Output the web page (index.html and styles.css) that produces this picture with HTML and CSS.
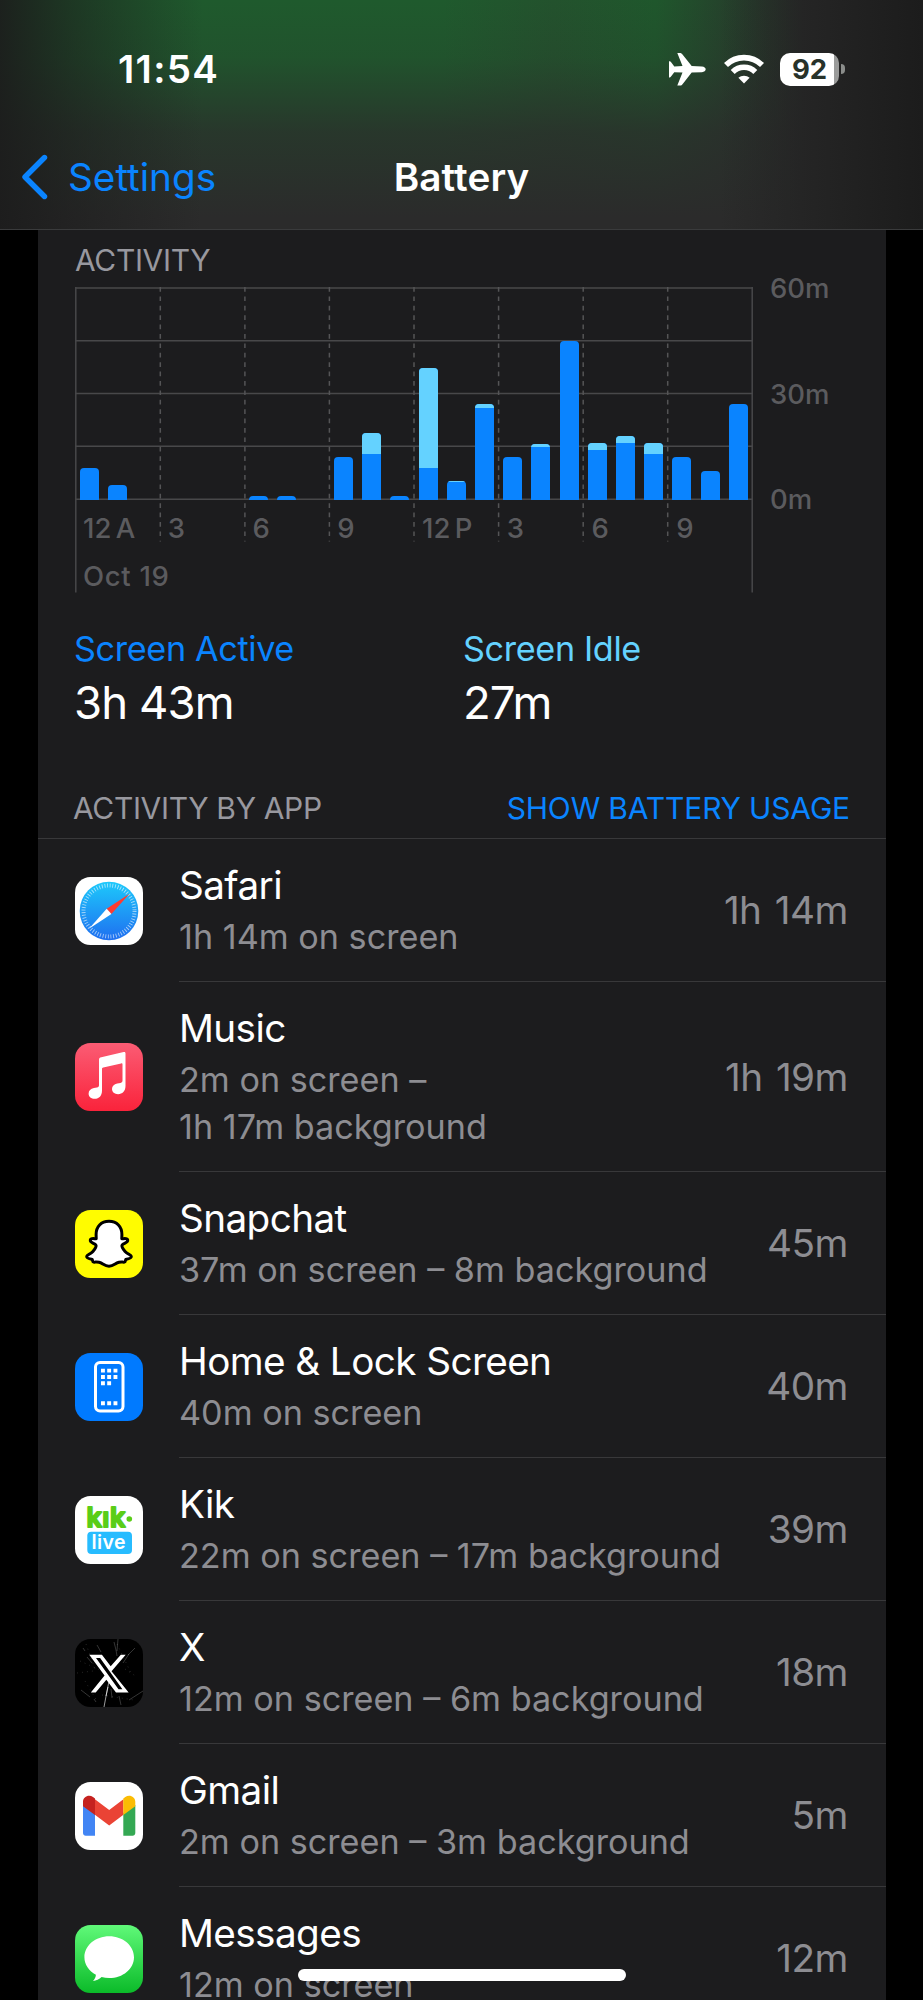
FILE: index.html
```html
<!DOCTYPE html>
<html lang="en">

<head>
  <meta charset="UTF-8">
  <meta name="viewport" content="width=device-width, initial-scale=1.0">
  <title>Battery</title>
  <link rel="stylesheet" href="styles.css">
</head>

<body>
  <div class="screen">
    <header class="header">
      <div class="status-bar">
        <span class="status-time">11:54</span>
        <div class="status-icons">
          <svg class="icon-plane" viewBox="0 0 37 33" fill="#fff">
            <path d="M33 13.400c2.200.2 3.700 1.400 3.700 2.900s-1.500 2.700-3.700 2.900l-10.300.4-9.400 11.800c-.7.900-1.500 1.100-2.600 1.100H8.300l5.200-12.900-8.200-.4-3.500 4.600c-.3.400-.7.600-1.200.6H0V8.200h.6c.5 0 .9.200 1.200.6l3.500 4.600 8.200-.4L8.300.1h2.400c1.100 0 1.900.3 2.600 1.200L22.700 13z" />
          </svg>
          <svg class="icon-wifi" viewBox="0 0 40 30" fill="none" stroke="#fff" stroke-width="5.600">
            <path d="M2 11a25.600 25.600 0 0 1 36 0" />
            <path d="M8.700 17.900a16 16 0 0 1 22.600 0" />
            <path d="M20 29.500l-5.600-5.700c3-2.900 8.200-2.900 11.200 0z" fill="#fff" stroke="none" />
          </svg>
          <div class="battery">
            <span class="battery-level">92</span>
            <span class="battery-cap"></span>
          </div>
        </div>
      </div>
      <nav class="nav-bar">
        <a class="nav-back">
          <svg class="icon-back" viewBox="0 0 28 46" fill="none" stroke="#0a84ff" stroke-width="5.400" stroke-linecap="round" stroke-linejoin="round">
            <path d="M24.500 3.500L5 23l19.500 19.500" />
          </svg>
          <span>Settings</span>
        </a>
        <h1 class="nav-title">Battery</h1>
      </nav>
    </header>

    <main class="card">
      <section class="activity">
        <h2 class="caption">ACTIVITY</h2>
        <div class="chart">
          <div class="chart-body">
            <svg class="chart-grid" viewBox="0 0 678 306" fill="none" stroke="#48484a" stroke-width="1.500">
              <path d="M0 1h678M0 53.700h678M0 106.500h678M0 159.300h678M0 212.200h678" />
              <path d="M.8 0v305.500M677.200 0v305.500" />
              <path stroke="#545456" stroke-dasharray="4.700 4.700" d="M85.300 0v254.500M169.900 0v254.500M254.400 0v254.500M339 0v254.500M423.600 0v254.500M508.200 0v254.500M592.700 0v254.500" />
            </svg>
            <div class="bars" id="bars"></div>
            <div class="hours">
              <span>12 A</span><span>3</span><span>6</span><span>9</span>
              <span>12 P</span><span>3</span><span>6</span><span>9</span>
            </div>
            <div class="date">Oct 19</div>
          </div>
          <div class="scale">
            <span>60m</span>
            <span>30m</span>
            <span>0m</span>
          </div>
        </div>
        <div class="totals">
          <div class="total">
            <div class="total-label active">Screen Active</div>
            <div class="total-value">3h 43m</div>
          </div>
          <div class="total">
            <div class="total-label idle">Screen Idle</div>
            <div class="total-value">27m</div>
          </div>
        </div>
      </section>

      <div class="list-header">
        <h2 class="caption">ACTIVITY BY APP</h2>
        <a class="caption link">SHOW BATTERY USAGE</a>
      </div>

      <ul class="app-list">
        <li class="app">
          <svg class="app-icon" viewBox="0 0 68 68">
            <defs>
              <linearGradient id="safari-bg" x1="0" y1="0" x2="0" y2="1">
                <stop offset="0" stop-color="#1dc9fb" />
                <stop offset="1" stop-color="#1f6ff0" />
              </linearGradient>
            </defs>
            <rect width="68" height="68" fill="#fff" />
            <circle cx="34" cy="34" r="29.300" fill="url(#safari-bg)" />
            <circle cx="34" cy="34" r="25.500" fill="none" stroke="#fff" stroke-opacity=".6" stroke-width="4" stroke-dasharray=".9 1.770" />
            <path d="M54.500 16.800L31.700 31.800 34 34.400l2.400 2.700z" fill="#ff3b30" />
            <path d="M14 51.800l17.700-20 4.700 5.300z" fill="#fff" />
          </svg>
          <div class="app-row">
            <div class="app-info">
              <h3>Safari</h3>
              <p>1h 14m on screen</p>
            </div>
            <span class="app-time">1h 14m</span>
          </div>
        </li>

        <li class="app">
          <svg class="app-icon" viewBox="0 0 68 68">
            <defs>
              <linearGradient id="music-bg" x1="0" y1="0" x2="0" y2="1">
                <stop offset="0" stop-color="#fb5c74" />
                <stop offset="1" stop-color="#fa233b" />
              </linearGradient>
            </defs>
            <rect width="68" height="68" fill="url(#music-bg)" />
            <path fill="#fff" d="M26.300 14.300L48.600 9.100c1.200-.3 1.900.2 1.900 1.400V43c0 5-3.200 8.200-7.400 8.200-3.500 0-6.100-2-6.100-5.100 0-3 2-5 5.200-5.600l3.300-.6c1.500-.3 2-1 2-2.300V21.500c0-1-.5-1.300-1.400-1.100l-17.800 4c-1 .2-1.300.7-1.300 1.700v21.600c0 5-3 8.100-7.200 8.100-3.600 0-6.200-2-6.200-5.100 0-3 2.100-5 5.300-5.600l3-.6c1.500-.3 2.100-1 2.100-2.300V16.800c0-1.500.8-2.200 2.300-2.500z" />
          </svg>
          <div class="app-row">
            <div class="app-info">
              <h3>Music</h3>
              <p>2m on screen –<br>1h 17m background</p>
            </div>
            <span class="app-time">1h 19m</span>
          </div>
        </li>

        <li class="app">
          <svg class="app-icon" viewBox="0 0 68 68">
            <rect width="68" height="68" fill="#fffc00" />
            <path fill="#fff" stroke="#000" stroke-width="3" stroke-linejoin="round" d="M34 11.300c-8 0-12.900 5.600-12.900 13.100l.1 4.300c-2 .1-5.500-.9-5.900 1.300-.4 2.600 3.400 3.100 5.200 4.600 1.600 1.400-.5 4.400-2.600 6.800-2.300 2.600-5.800 3.400-6.200 4.900-.4 1.800 3.200 2.500 5.500 3.100.5 1 .2 2.500 1.300 2.700 1.500.3 4.400-.7 7.400.8 2.500 1.300 4.500 3.400 8.100 3.400s5.600-2.100 8.100-3.400c3-1.500 5.900-.5 7.400-.8 1.100-.2.800-1.700 1.300-2.700 2.300-.6 5.900-1.300 5.500-3.100-.4-1.500-3.900-2.300-6.200-4.900-2.100-2.400-4.200-5.400-2.600-6.800 1.800-1.500 5.600-2 5.200-4.600-.4-2.200-3.900-1.200-5.900-1.300l.1-4.300c0-7.500-4.900-13.100-12.900-13.100z" />
          </svg>
          <div class="app-row">
            <div class="app-info">
              <h3>Snapchat</h3>
              <p>37m on screen – 8m background</p>
            </div>
            <span class="app-time">45m</span>
          </div>
        </li>

        <li class="app">
          <svg class="app-icon" viewBox="0 0 68 68">
            <rect width="68" height="68" fill="#007aff" />
            <rect x="20.500" y="9.500" width="27.500" height="48.400" rx="4.500" fill="none" stroke="#fff" stroke-width="3" />
            <path fill="#fff" d="M26 15.700h3.900v3.900H26zM32.200 15.700h3.900v3.900h-3.900zM38.500 15.700h3.900v3.900h-3.900zM26 22h3.900v3.900H26zM32.200 22h3.900v3.900h-3.900zM38.500 22h3.900v3.900h-3.900zM26 28.300h3.900v3.900H26zM32.200 28.300h3.900v3.900h-3.900zM26 48.300h3.900v3.900H26zM32.200 48.300h3.900v3.900h-3.900zM38.500 48.300h3.900v3.900h-3.900z" />
          </svg>
          <div class="app-row">
            <div class="app-info">
              <h3>Home &amp; Lock Screen</h3>
              <p>40m on screen</p>
            </div>
            <span class="app-time">40m</span>
          </div>
        </li>

        <li class="app">
          <svg class="app-icon" viewBox="0 0 68 68">
            <rect width="68" height="68" fill="#fff" />
            <circle cx="54.300" cy="23" r="2.800" fill="#5acd18" />
            <rect x="12.300" y="35.700" width="44.700" height="22.300" rx="4" fill="#27bcff" />
            <text>
              <tspan class="kik-name" x="11.500" y="31">kık</tspan>
              <tspan class="kik-live" x="16.500" y="53.200">live</tspan>
            </text>
          </svg>
          <div class="app-row">
            <div class="app-info">
              <h3>Kik</h3>
              <p>22m on screen – 17m background</p>
            </div>
            <span class="app-time">39m</span>
          </div>
        </li>

        <li class="app">
          <svg class="app-icon" viewBox="0 0 68 68">
            <rect width="68" height="68" fill="#000" />
            <g fill="none" stroke="#fff" stroke-width=".6">
              <path stroke-opacity=".6" stroke-width="1" d="M34 42l-2 10-3 16M33 48l-2 9" />
              <path stroke-opacity=".35" d="M39 3l2 8 1 6M43 0l-1 12M22 6l4 7M12 18l5 6M54 61l14-9M60 9l-7 7M36 50l1 9M44 57l2 9M6 51l9 7M48 24l6-9M19 60l2 3M8 9l2 3" />
              <path stroke-opacity=".25" stroke-dasharray="1 4" d="M5 22l20 9M10 42l12 20M42 5l14 29M50 30l12 8M27 56l32 5M11 5l9 25M2 34l16-2" />
            </g>
            <path fill="#fff" transform="translate(11.900 11.400) scale(1.860 1.930)" d="M18.244 2.250h2.600l-7.600 8.600 9.200 10.900h-6.800l-5.200-6.500-5.700 6.500H2.100l7.400-8.700L1.254 2.250H8.080l4.713 5.900zM17 20.100h2.100L7.100 3.900H4.900z" />
          </svg>
          <div class="app-row">
            <div class="app-info">
              <h3>X</h3>
              <p>12m on screen – 6m background</p>
            </div>
            <span class="app-time">18m</span>
          </div>
        </li>

        <li class="app">
          <svg class="app-icon" viewBox="0 0 68 68">
            <rect width="68" height="68" fill="#fff" />
            <path fill="#4285f4" d="M8 23l12 8v22.700h-9.300c-1.500 0-2.700-1.200-2.700-2.700z" />
            <path fill="#34a853" d="M60.300 23l-12 8v22.700h9.300c1.500 0 2.700-1.200 2.700-2.700z" />
            <path fill="#ea4335" d="M19.900 17.300l14.300 10.800 14.200-10.800v15.500L34.200 43.500 19.900 32.800z" />
            <path fill="#c5221f" d="M8 24.300v-4.600c0-5 6-7.700 10-4.600l2 1.500v16.500z" />
            <path fill="#fbbc04" d="M60.300 24.300v-4.600c0-5-6-7.700-10-4.600l-2 1.500v16.500z" />
          </svg>
          <div class="app-row">
            <div class="app-info">
              <h3>Gmail</h3>
              <p>2m on screen – 3m background</p>
            </div>
            <span class="app-time">5m</span>
          </div>
        </li>

        <li class="app">
          <svg class="app-icon" viewBox="0 0 68 68">
            <defs>
              <linearGradient id="messages-bg" x1="0" y1="0" x2="0" y2="1">
                <stop offset="0" stop-color="#60f979" />
                <stop offset="1" stop-color="#0bbb29" />
              </linearGradient>
            </defs>
            <rect width="68" height="68" fill="url(#messages-bg)" />
            <path fill="#fff" d="M34.200 11.300c13.700 0 24.800 9.300 24.800 20.900S47.900 53.100 34.200 53.100c-2.700 0-5.200-.4-7.600-1-2.300 2.300-5.400 3.700-8.600 3.900 1.500-1.500 2.700-3.600 2.900-6.300C13.900 46 9.400 39.500 9.400 32.200c0-11.600 11.100-20.900 24.800-20.900z" />
          </svg>
          <div class="app-row">
            <div class="app-info">
              <h3>Messages</h3>
              <p>12m on screen</p>
            </div>
            <span class="app-time">12m</span>
          </div>
        </li>
      </ul>
    </main>

    <div class="home-indicator"></div>
  </div>

  <script>
    // minutes per hour of the day: [screen active, screen idle]
    const usage = [
      [9, 0], [4, 0], [0, 0], [0, 0], [0, 0], [0, 0],
      [1, 0], [1, 0], [0, 0], [12, 0], [13, 6], [1, 0],
      [9, 28.2], [5, 0.2], [26, 1], [12, 0], [15, 0.8], [45, 0],
      [14, 2], [16, 2], [13, 3], [12, 0], [8, 0], [27, 0]
    ];

    const bars = document.getElementById('bars');

    usage.forEach(([active, idle]) => {
      const bar = document.createElement('div');
      bar.className = 'bar';
      bar.style.height = ((active + idle) / 60) * 100 + '%';

      if (idle) {
        const top = document.createElement('div');
        top.className = 'bar-idle';
        top.style.height = (idle / (active + idle)) * 100 + '%';
        bar.appendChild(top);
      }

      bars.appendChild(bar);
    });
  </script>
</body>

</html>
```

FILE: styles.css
```css
* {
  margin: 0;
  padding: 0;
  box-sizing: border-box;
}

body {
  font-family: Inter, 'Liberation Sans', sans-serif;
  background-color: #000;
  color: #fff;
}

.screen {
  position: relative;
  width: 923px;
  height: 2000px;
  overflow: hidden;
}

/* header */
.header {
  height: 230px;
  border-bottom: 1px solid #3a3b3c;
  background:
    linear-gradient(90deg, rgba(28, 28, 28, 0.92) 0%, rgba(28, 28, 28, 0.55) 8%, rgba(28, 28, 28, 0) 22%, rgba(28, 28, 28, 0) 78%, rgba(28, 28, 28, 1) 100%),
    linear-gradient(180deg, rgba(43, 43, 43, 0) 0%, rgba(43, 43, 43, 0.15) 25%, rgba(43, 43, 43, 0.75) 58%, #2b2b2b 95%),
    linear-gradient(90deg, #1f5a2d 0%, #1f5a2d 48%, #23522d 60%, #1f572c 71%, #2b2b2b 87%);
}

.status-bar {
  display: flex;
  justify-content: space-between;
  height: 123px;
  padding: 44px 78px 0 118px;
}

.status-time {
  font-size: 38.5px;
  font-weight: 600;
  line-height: 50px;
  letter-spacing: 1.3px;
}

.status-icons {
  display: flex;
  align-items: center;
  height: 50px;
}

.icon-plane {
  width: 37px;
  height: 33px;
  margin-right: 18px;
}

.icon-wifi {
  width: 40px;
  height: 30px;
  margin-right: 16px;
}

.battery {
  display: flex;
  align-items: center;
  gap: 2px;
}

.battery-level {
  width: 59px;
  height: 33px;
  border-radius: 10px;
  background: linear-gradient(90deg, #fff 54px, #9a9b9a 54px);
  color: #27322a;
  font-size: 27.5px;
  font-weight: 700;
  line-height: 33px;
  text-align: center;
}

.battery-cap {
  width: 4px;
  height: 10px;
  border-radius: 0 4px 4px 0;
  background-color: #8b8d8b;
}

.nav-bar {
  display: grid;
  grid-template-columns: 1fr auto 1fr;
  align-items: center;
  height: 107px;
  padding: 0 20px;
}

.nav-back {
  display: flex;
  align-items: center;
  gap: 20px;
  color: #0a84ff;
  font-size: 38.7px;
  line-height: 50px;
  letter-spacing: 0;
}

.icon-back {
  width: 28px;
  height: 46px;
}

.nav-title {
  font-size: 38.7px;
  font-weight: 600;
  line-height: 50px;
  letter-spacing: 0.1px;
}

/* chart */
.card {
  margin: 0 37px 0 38px;
  background-color: #1c1c1e;
  overflow: hidden;
}

.activity {
  height: 554px;
  padding: 12px 36px 0 37px;
}

.caption {
  color: #98989f;
  font-size: 30px;
  font-weight: 400;
  line-height: 36px;
  letter-spacing: -0.35px;
}

.chart {
  display: flex;
  gap: 17px;
  margin-top: 9px;
}

.chart-body {
  position: relative;
  width: 678px;
  height: 306px;
}

.chart-grid {
  position: absolute;
  inset: 0;
}

.bars {
  position: relative;
  display: grid;
  grid-template-columns: repeat(24, 1fr);
  align-items: end;
  height: 212.5px;
  padding: 1px 0 0 1px;
}

.bar {
  width: 19px;
  margin-left: 4px;
  border-radius: 4px 4px 0 0;
  background-color: #0a84ff;
  overflow: hidden;
}

.bar-idle {
  background-color: #64d2ff;
}

.hours {
  display: grid;
  grid-template-columns: repeat(8, 1fr);
  padding-top: 10px;
}

.hours span {
  padding-left: 8px;
}

.hours,
.date,
.scale {
  color: #5b5b5e;
  font-size: 27.5px;
  font-weight: 500;
  line-height: 36px;
}

.hours {
  word-spacing: -3px;
}

.date {
  padding: 12px 0 0 8px;
  letter-spacing: 0.7px;
}

.scale {
  display: flex;
  flex-direction: column;
  justify-content: space-between;
  height: 247px;
  margin-top: -17px;
}

.totals {
  display: grid;
  grid-template-columns: 389px 1fr;
  margin: 32px 0 0 -1px;
}

.total-label {
  font-size: 34.2px;
  line-height: 47px;
  letter-spacing: -0.35px;
}

.total-label.active {
  color: #0a84ff;
}

.total-label.idle {
  color: #64d2ff;
}

.total-value {
  margin-top: 2px;
  font-size: 45.5px;
  line-height: 57px;
  letter-spacing: -0.9px;
}

/* app list */
.list-header {
  display: flex;
  justify-content: space-between;
  padding: 6px 36px 12px 35px;
  border-bottom: 1px solid #38383a;
}

.link {
  color: #0a84ff;
  letter-spacing: -0.15px;
}

.app-list {
  list-style: none;
}

.app {
  display: flex;
  align-items: center;
  padding-left: 37px;
}

.app-icon {
  flex: none;
  width: 68px;
  height: 68px;
  margin-right: 36px;
  border-radius: 15.5px;
}

.app-row {
  flex: 1;
  display: flex;
  align-items: center;
  justify-content: space-between;
  padding: 21px 38px 21px 0;
  border-bottom: 1px solid #38383a;
}

.app-info h3 {
  font-size: 38.7px;
  font-weight: 400;
  line-height: 50px;
  letter-spacing: -0.6px;
}

.app-info p {
  margin-top: 3px;
  color: #8d8d92;
  font-size: 34.2px;
  line-height: 47px;
}

.app-time {
  color: #8d8d92;
  font-size: 38.7px;
  line-height: 50px;
  letter-spacing: -0.5px;
  word-spacing: 3px;
}

.kik-name {
  fill: #5acd18;
  stroke: #5acd18;
  stroke-width: 2px;
  stroke-linejoin: round;
  font-size: 27px;
  font-weight: 600;
  letter-spacing: 0.5px;
}

.kik-live {
  fill: #fff;
  font-size: 19.5px;
  font-weight: 600;
  letter-spacing: 0.4px;
}

.home-indicator {
  position: absolute;
  left: 298px;
  bottom: 19px;
  width: 328px;
  height: 12px;
  border-radius: 6px;
  background-color: #fff;
}
```
